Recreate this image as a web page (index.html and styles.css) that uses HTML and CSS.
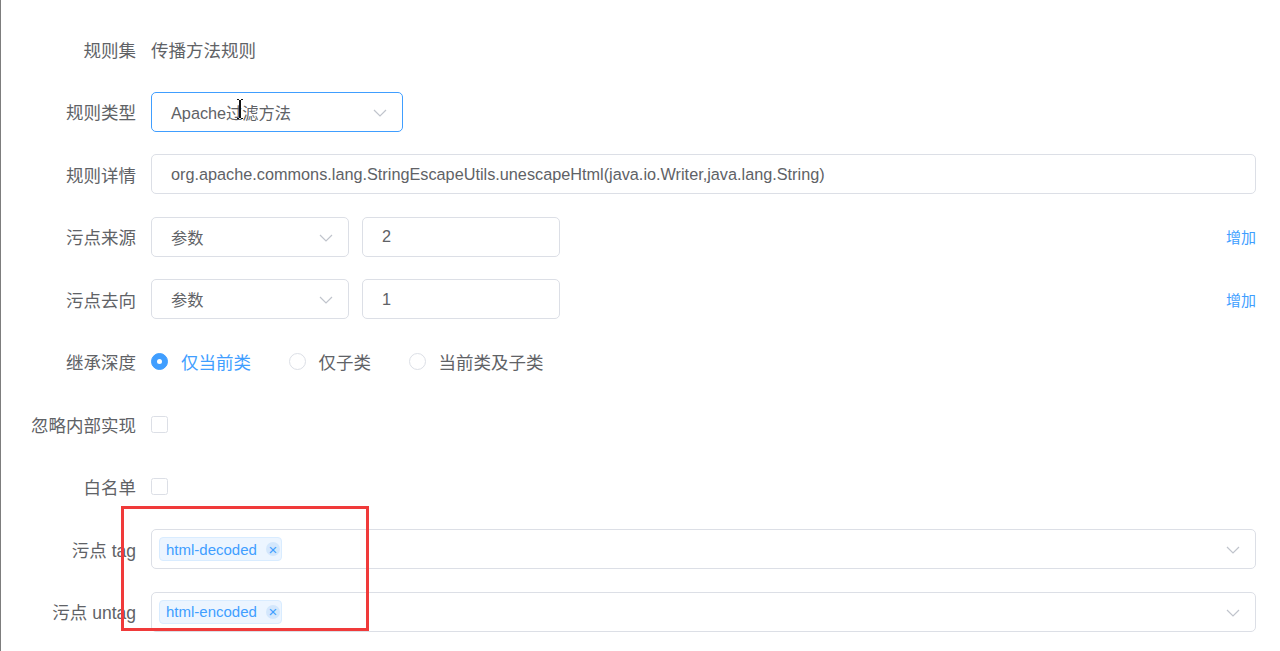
FILE: index.html
```html
<!DOCTYPE html>
<html lang="zh-CN">
<head>
<meta charset="utf-8">
<title>规则</title>
<link rel="stylesheet" href="styles.css">
</head>
<body>
<div class="page">
  <form class="form">
    <div class="form-item">
      <label class="label">规则集</label>
      <div class="content"><span class="plain">传播方法规则</span></div>
    </div>
    <div class="form-item">
      <label class="label">规则类型</label>
      <div class="content">
        <div class="input select focused w-type"><span class="val">Apache过滤方法</span>
          <svg class="arrow" viewBox="0 0 14 8" width="14" height="8"><path d="M1 1 L7 7 L13 1" fill="none" stroke="#c0c4cc" stroke-width="1.2"/></svg>
        </div>
      </div>
    </div>
    <div class="form-item">
      <label class="label">规则详情</label>
      <div class="content">
        <div class="input full"><span class="val">org.apache.commons.lang.StringEscapeUtils.unescapeHtml(java.io.Writer,java.lang.String)</span></div>
      </div>
    </div>
    <div class="form-item">
      <label class="label">污点来源</label>
      <div class="content">
        <div class="input select w-half"><span class="val">参数</span>
          <svg class="arrow" viewBox="0 0 14 8" width="14" height="8"><path d="M1 1 L7 7 L13 1" fill="none" stroke="#c0c4cc" stroke-width="1.2"/></svg>
        </div>
        <div class="input w-half gap-left"><span class="val">2</span></div>
        <a class="link">增加</a>
      </div>
    </div>
    <div class="form-item">
      <label class="label">污点去向</label>
      <div class="content">
        <div class="input select w-half"><span class="val">参数</span>
          <svg class="arrow" viewBox="0 0 14 8" width="14" height="8"><path d="M1 1 L7 7 L13 1" fill="none" stroke="#c0c4cc" stroke-width="1.2"/></svg>
        </div>
        <div class="input w-half gap-left"><span class="val">1</span></div>
        <a class="link">增加</a>
      </div>
    </div>
    <div class="form-item">
      <label class="label">继承深度</label>
      <div class="content radios">
        <span class="radio checked"><span class="dot"></span><span class="rtext">仅当前类</span></span>
        <span class="radio"><span class="dot"></span><span class="rtext">仅子类</span></span>
        <span class="radio"><span class="dot"></span><span class="rtext">当前类及子类</span></span>
      </div>
    </div>
    <div class="form-item">
      <label class="label">忽略内部实现</label>
      <div class="content"><span class="checkbox"></span></div>
    </div>
    <div class="form-item">
      <label class="label">白名单</label>
      <div class="content"><span class="checkbox"></span></div>
    </div>
    <div class="form-item">
      <label class="label">污点 tag</label>
      <div class="content">
        <div class="input select tags full">
          <span class="tag">html-decoded<span class="close">×</span></span>
          <svg class="arrow" viewBox="0 0 14 8" width="14" height="8"><path d="M1 1 L7 7 L13 1" fill="none" stroke="#c0c4cc" stroke-width="1.2"/></svg>
        </div>
      </div>
    </div>
    <div class="form-item">
      <label class="label">污点 untag</label>
      <div class="content">
        <div class="input select tags full">
          <span class="tag">html-encoded<span class="close">×</span></span>
          <svg class="arrow" viewBox="0 0 14 8" width="14" height="8"><path d="M1 1 L7 7 L13 1" fill="none" stroke="#c0c4cc" stroke-width="1.2"/></svg>
        </div>
      </div>
    </div>
  </form>
  <div class="highlight"></div>
  <svg class="ibeam" width="6" height="20" viewBox="0 0 6 20"><path d="M0 0.5 H2 M4 0.5 H6 M0 19.5 H2 M4 19.5 H6" stroke="#111" stroke-width="1.2" fill="none"/><rect x="2" y="1" width="2" height="18" fill="#111"/></svg>
</div>
</body>
</html>
```
FILE: styles.css
```css
html, body {
  margin: 0;
  padding: 0;
  background: #fff;
}
body {
  font-family: "Liberation Sans", "Noto Sans CJK SC", sans-serif;
  font-size: 17.5px;
  color: #606266;
}
.page {
  position: relative;
  height: 651px;
  box-sizing: border-box;
  border-left: 1px solid #7d7d7d;
  padding: 29px 24px 0 0;
  overflow: hidden;
}
.form-item {
  display: flex;
  align-items: center;
  height: 40px;
  margin-bottom: 22.5px;
}
.label {
  flex: none;
  width: 150px;
  box-sizing: border-box;
  padding-right: 15px;
  text-align: right;
  color: #606266;
  white-space: nowrap;
}
.content {
  flex: 1;
  display: flex;
  align-items: center;
  height: 40px;
  min-width: 0;
}
.plain {
  color: #606266;
}
.input {
  position: relative;
  display: flex;
  align-items: center;
  height: 40px;
  box-sizing: border-box;
  border: 1px solid #dcdfe6;
  border-radius: 5px;
  padding: 0 19px;
  background: #fff;
  color: #606266;
  font-size: 16.25px;
  white-space: nowrap;
}
.input.focused {
  border-color: #409eff;
}
.w-type { width: 252px; }
.w-half { width: 198px; }
.gap-left { margin-left: 13px; }
.full { flex: 1; }
.select .arrow {
  position: absolute;
  right: 15px;
  top: 16px;
}
.link {
  margin-left: auto;
  font-size: 15px;
  color: #409eff;
  cursor: pointer;
}
.radio {
  display: inline-flex;
  align-items: center;
  margin-right: 37.5px;
}
.radio .dot {
  width: 17px;
  height: 17px;
  box-sizing: border-box;
  border: 1px solid #dcdfe6;
  border-radius: 50%;
  background: #fff;
  position: relative;
}
.radio.checked .dot {
  background: #409eff;
  border-color: #409eff;
}
.radio.checked .dot::after {
  content: "";
  position: absolute;
  left: 50%;
  top: 50%;
  width: 5px;
  height: 5px;
  margin: -2.5px 0 0 -2.5px;
  border-radius: 50%;
  background: #fff;
}
.rtext {
  margin-left: 13px;
  color: #606266;
}
.radio.checked .rtext {
  color: #409eff;
}
.checkbox {
  display: inline-block;
  width: 17px;
  height: 17px;
  box-sizing: border-box;
  border: 1px solid #dcdfe6;
  border-radius: 2.5px;
  background: #fff;
}
.tags {
  padding-left: 7px;
}
.tag {
  display: inline-flex;
  align-items: center;
  height: 24px;
  box-sizing: border-box;
  padding: 0 1px 0 6px;
  border: 1px solid #d9ecff;
  border-radius: 4px;
  background: #ecf5ff;
  color: #409eff;
  font-size: 15px;
}
.close {
  display: inline-flex;
  align-items: center;
  justify-content: center;
  width: 14px;
  height: 14px;
  margin-left: 9px;
  border-radius: 50%;
  background: #d3e7fc;
  color: #409eff;
  font-size: 15px;
  line-height: 1;
}
.highlight {
  position: absolute;
  left: 120px;
  top: 506px;
  width: 248px;
  height: 125px;
  box-sizing: border-box;
  border: 3px solid #f03a3a;
}
.ibeam {
  position: absolute;
  left: 236px;
  top: 99px;
}
```
